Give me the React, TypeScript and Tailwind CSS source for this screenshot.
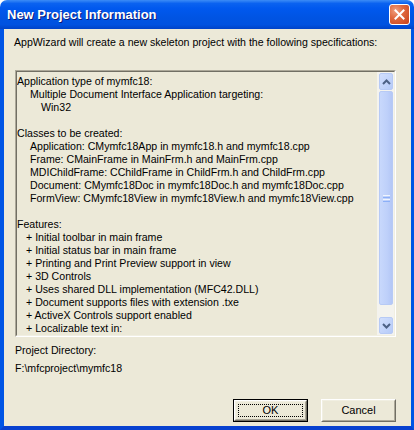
import React from "react";

const FONT = { fontFamily: "'Liberation Sans', Arial, sans-serif" };

type Line = { t: string; i: number };

const lines: Line[] = [
  { t: "Application type of mymfc18:", i: 0 },
  { t: "Multiple Document Interface Application targeting:", i: 13 },
  { t: "Win32", i: 24 },
  { t: "", i: 0 },
  { t: "Classes to be created:", i: 0 },
  { t: "Application: CMymfc18App in mymfc18.h and mymfc18.cpp", i: 13 },
  { t: "Frame: CMainFrame in MainFrm.h and MainFrm.cpp", i: 13 },
  { t: "MDIChildFrame: CChildFrame in ChildFrm.h and ChildFrm.cpp", i: 13 },
  { t: "Document: CMymfc18Doc in mymfc18Doc.h and mymfc18Doc.cpp", i: 13 },
  { t: "FormView: CMymfc18View in mymfc18View.h and mymfc18View.cpp", i: 13 },
  { t: "", i: 0 },
  { t: "Features:", i: 0 },
  { t: "+ Initial toolbar in main frame", i: 9 },
  { t: "+ Initial status bar in main frame", i: 9 },
  { t: "+ Printing and Print Preview support in view", i: 9 },
  { t: "+ 3D Controls", i: 9 },
  { t: "+ Uses shared DLL implementation (MFC42.DLL)", i: 9 },
  { t: "+ Document supports files with extension .txe", i: 9 },
  { t: "+ ActiveX Controls support enabled", i: 9 },
  { t: "+ Localizable text in:", i: 9 },
];

function Chevron({ up }: { up: boolean }) {
  return (
    <svg width="9" height="6" viewBox="0 0 9 6" className="block">
      <path
        d={up ? "M1 5 L4.5 1.5 L8 5" : "M1 1 L4.5 4.5 L8 1"}
        fill="none"
        stroke="#4D6185"
        strokeWidth="2"
      />
    </svg>
  );
}

function ScrollButton({ up }: { up: boolean }) {
  return (
    <div className="h-[17px] w-full rounded-[2px] border border-[#B7CAF5] bg-gradient-to-br from-[#D2DFFD] to-[#B6CBF8] flex items-center justify-center">
      <Chevron up={up} />
    </div>
  );
}

function ClassicButton({ label, def }: { label: string; def?: boolean }) {
  const inner = (
    <div className="h-full w-full border-t border-l border-t-white border-l-white border-b border-r border-b-[#716F64] border-r-[#716F64]">
      <div className="h-full w-full border-t border-l border-t-[#F1EFE2] border-l-[#F1EFE2] border-b border-r border-b-[#ACA899] border-r-[#ACA899] flex items-center justify-center p-[2px]">
        {def ? (
          <div className="h-full w-full border border-dotted border-black flex items-center justify-center">
            {label}
          </div>
        ) : (
          label
        )}
      </div>
    </div>
  );
  return (
    <div
      className={
        "w-[75px] h-[23px] text-[11px] text-black leading-none " +
        (def ? "border border-black" : "")
      }
      style={FONT}
    >
      {inner}
    </div>
  );
}

export default function App() {
  return (
    <div className="w-[414px] h-[430px] bg-white" style={FONT}>
      <div className="w-[414px] h-[430px] flex flex-col">
        {/* Title bar */}
        <div className="h-[29px] shrink-0 rounded-t-[7px] bg-[linear-gradient(to_bottom,#3C8CF6_0%,#0A62F0_12%,#0058EE_30%,#0054E3_60%,#0052E0_85%,#0043C8_100%)] flex items-center pl-[7px] pr-[4px]">
          <span
            className="text-white font-bold text-[13px] [text-shadow:1px_1px_0_#0A1A7A] mt-[1px]"
            style={FONT}
          >
            New Project Information
          </span>
          <div className="ml-auto mr-[0px] w-[21px] h-[21px] rounded-[3px] border border-white bg-[radial-gradient(circle_at_30%_30%,#F0A080_0%,#E06A40_40%,#C8401A_100%)] flex items-center justify-center">
            <svg width="11" height="11" viewBox="0 0 11 11">
              <path d="M1.5 1.5 L9.5 9.5 M9.5 1.5 L1.5 9.5" stroke="white" strokeWidth="2" strokeLinecap="square" />
            </svg>
          </div>
        </div>
        {/* Body with frame */}
        <div className="flex-1 flex flex-col bg-[#ECE9D8] border-l-[4px] border-l-[#0055E5] border-r-[3px] border-r-[#0055E5] border-b-[4px] border-b-[#0841D0] pl-[11px] pr-[14px] text-[10.6px] text-black">
          <div className="mt-[7px] leading-[13px] -ml-[1px]">
            AppWizard will create a new skeleton project with the following specifications:
          </div>
          {/* Text box */}
          <div className="mt-[21px] h-[267px] w-[381px] border-t border-l border-t-[#ACA899] border-l-[#ACA899] border-b border-r border-b-white border-r-white">
            <div className="h-full w-full border-t border-l border-t-[#716F64] border-l-[#716F64] border-b border-r border-b-[#F1EFE2] border-r-[#F1EFE2] flex">
              <div className="flex-1 pt-[3px] leading-[13px] overflow-hidden">
                {lines.map((l, idx) => (
                  <div
                    key={idx}
                    className="h-[13px] whitespace-pre"
                    style={{ paddingLeft: l.i }}
                  >
                    {l.t}
                  </div>
                ))}
              </div>
              {/* Scrollbar */}
              <div className="w-[17px] shrink-0 flex flex-col bg-[#F4F3EE] pl-[2px] pr-[1px] py-[1px]">
                <ScrollButton up />
                <div className="flex-1 flex flex-col pb-[12px] pt-[1px]">
                  <div className="flex-1 rounded-[2px] border border-[#B7CAF5] bg-[linear-gradient(to_right,#C8D8FC,#BED0FA_60%,#B4C7F6)] flex items-center justify-center">
                    <div className="flex flex-col gap-[1px]">
                      <div className="w-[7px] h-[1px] bg-[#EEF4FE]" />
                      <div className="w-[7px] h-[1px] bg-[#8CB0F8]" />
                      <div className="w-[7px] h-[1px] bg-[#EEF4FE]" />
                      <div className="w-[7px] h-[1px] bg-[#8CB0F8]" />
                    </div>
                  </div>
                </div>
                <ScrollButton up={false} />
              </div>
            </div>
          </div>
          <div className="mt-[7px] leading-[13px]">Project Directory:</div>
          <div className="mt-[5px] leading-[13px]">F:\mfcproject\mymfc18</div>
          <div className="mt-auto mb-[4px] flex justify-end gap-[13px] pr-[1px]">
            <ClassicButton label="OK" def />
            <ClassicButton label="Cancel" />
          </div>
        </div>
      </div>
    </div>
  );
}
